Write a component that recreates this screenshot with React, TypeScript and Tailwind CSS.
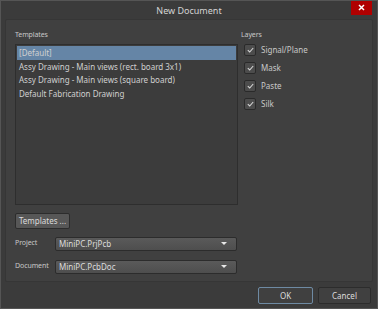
import React from "react";

const font = { fontFamily: '"Noto Sans", "Open Sans", sans-serif' };

function Check() {
  return (
    <div className="w-[12px] h-[12px] rounded-[2px] border border-[#2a2a2a] bg-[#4c4c4c] flex items-center justify-center">
      <svg width="7" height="6" viewBox="0 0 7 6">
        <path d="M0.8 3.2 L2.7 5 L6.2 1" stroke="#d8d8d8" strokeWidth="1.1" fill="none" />
      </svg>
    </div>
  );
}

function Combo({ value }: { value: string }) {
  return (
    <div className="w-[182px] h-[14px] rounded-[2px] border border-[#2c2c2c] bg-gradient-to-b from-[#5a5a5a] to-[#4e4e4e] flex items-center justify-between pl-[3px] pr-[9px] text-[#dcdcdc] text-[8px]">
      <span>{value}</span>
      <svg width="6" height="4" viewBox="0 0 6 4">
        <path d="M0 0 H6 L3 3 Z" fill="#e8e8e8" />
      </svg>
    </div>
  );
}

export default function App() {
  const rows = [
    "[Default]",
    "Assy Drawing - Main views (rect. board 3x1)",
    "Assy Drawing - Main views (square board)",
    "Default Fabrication Drawing",
  ];
  const layers = ["Signal/Plane", "Mask", "Paste", "Silk"];
  return (
    <div style={font} className="w-[378px] h-[309px] bg-[#3b3b3b] border border-[#555] flex flex-col text-[#c8c8c8] overflow-hidden">
      <div className="h-[18px] flex items-start relative">
        <div className="flex-1 text-center text-[9px] text-[#d4d4d4] pt-[3px]">New Document</div>
        <div className="absolute right-[5px] top-[-1px] w-[21px] h-[15px] bg-[#b00000] flex items-center justify-center">
          <svg width="7" height="7" viewBox="0 0 7 7">
            <path d="M1 1 L6 6 M6 1 L1 6" stroke="#fff" strokeWidth="1.5" />
          </svg>
        </div>
      </div>
      <div className="mx-[4px] h-[263px] bg-[#404040] border border-[#363636] rounded-[2px] flex flex-col px-[9px] pt-[10px]">
        <div className="flex">
          <div className="w-[223px] flex flex-col">
            <div className="text-[7px] leading-[10px] h-[14px] tracking-[-0.1px]">Templates</div>
            <div className="h-[161px] bg-[#3c3c3c] border border-[#2e2e2e] p-[1px] text-[8px] text-[#d0d0d0]">
              {rows.map((r, i) => (
                <div key={r} className={`h-[13.5px] leading-[13.5px] pl-[2px] ${i === 0 ? "bg-[#6585a6]" : ""}`}>{r}</div>
              ))}
            </div>
          </div>
          <div className="ml-[3px] flex flex-col">
            <div className="text-[7px] leading-[10px] h-[14px] tracking-[-0.1px]">Layers</div>
            <div className="flex flex-col gap-[6px] pl-[3px]">
              {layers.map((l) => (
                <div key={l} className="flex items-center gap-[5px] text-[8px] h-[12px]">
                  <Check />
                  <span>{l}</span>
                </div>
              ))}
            </div>
          </div>
        </div>
        <div className="mt-[8px] w-[55px] h-[16px] rounded-[2px] border border-[#2c2c2c] bg-[#575757] text-[8px] text-[#dcdcdc] flex items-center justify-center">Templates ...</div>
        <div className="mt-[7px] flex items-center h-[15px]">
          <span className="w-[40px] text-[7px] tracking-[-0.1px]">Project</span>
          <Combo value="MiniPC.PrjPcb" />
        </div>
        <div className="mt-[8px] flex items-center h-[15px]">
          <span className="w-[40px] text-[7px] tracking-[-0.1px]">Document</span>
          <Combo value="MiniPC.PcbDoc" />
        </div>
      </div>
      <div className="flex justify-end gap-[5px] pr-[6px] pt-[5px]">
        <div className="w-[55px] h-[17px] rounded-[2px] border border-[#6e8aa3] bg-[#404040] text-[8px] text-[#dcdcdc] flex items-center justify-center">OK</div>
        <div className="w-[53px] h-[17px] rounded-[2px] border border-[#2c2c2c] bg-[#404040] text-[8px] text-[#dcdcdc] flex items-center justify-center">Cancel</div>
      </div>
    </div>
  );
}
